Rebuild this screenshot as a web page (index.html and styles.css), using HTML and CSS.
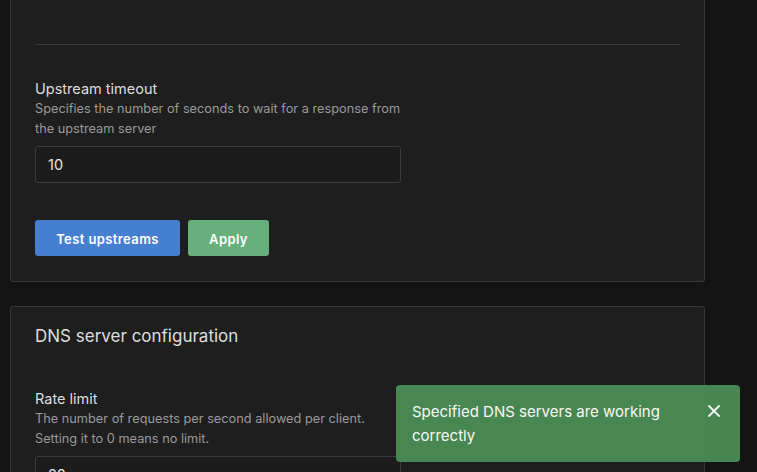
FILE: index.html
```html
<!DOCTYPE html>
<html lang="en">
<head>
    <meta charset="UTF-8">
    <meta name="viewport" content="width=device-width, initial-scale=1.0">
    <title>DNS settings</title>
    <link rel="stylesheet" href="styles.css">
</head>
<body>
    <div class="page">
        <div class="card card-upstream">
            <div class="card-body">
                <div class="divider"></div>

                <div class="form-group">
                    <label class="form-label" for="upstream-timeout">Upstream timeout</label>
                    <div class="form-desc">Specifies the number of seconds to wait for a response from the upstream server</div>
                    <input class="form-input" id="upstream-timeout" type="text" value="10">
                </div>

                <div class="btn-row">
                    <button class="btn btn-primary">Test upstreams</button>
                    <button class="btn btn-success">Apply</button>
                </div>
            </div>
        </div>

        <div class="card">
            <div class="card-header">
                <h2 class="card-title">DNS server configuration</h2>
            </div>
            <div class="card-body">
                <div class="form-group">
                    <label class="form-label" for="rate-limit">Rate limit</label>
                    <div class="form-desc">The number of requests per second allowed per client.<br>Setting it to 0 means no limit.</div>
                    <input class="form-input" id="rate-limit" type="text" value="20">
                </div>
            </div>
        </div>
    </div>

    <div class="toast">
        <div class="toast-text">Specified DNS servers are working correctly</div>
        <button class="toast-close" aria-label="Close">
            <svg width="12" height="12" viewBox="0 0 12 12">
                <path d="M1 1 L11 11 M11 1 L1 11" stroke="#fff" stroke-width="1.8" stroke-linecap="round"/>
            </svg>
        </button>
    </div>
</body>
</html>
```

FILE: styles.css
```css
body {
    margin: 0;
    background-color: #141414;
    font-family: Inter, 'Noto Sans', sans-serif;
    color: #e2e2e2;
    overflow: hidden;
}

.page {
    width: 695px;
    padding-left: 10px;
}

.card {
    background-color: #1e1e1e;
    border: 1px solid #383838;
    border-radius: 3px;
    margin-bottom: 24px;
}

.card-upstream {
    border-top: none;
    border-radius: 0 0 3px 3px;
}

.card-upstream .card-body {
    padding-top: 44px;
    padding-bottom: 25px;
}

.card-header {
    height: 54px;
    box-sizing: border-box;
    display: flex;
    align-items: center;
    padding: 4px 24px 0;
    border-bottom: 1px solid #1c1f24;
}

.card-title {
    margin: 0;
    font-size: 17px;
    font-weight: 400;
    color: #dedede;
}

.card-body {
    padding: 28px 24px 24px;
}

.divider {
    height: 1px;
    background-color: #393939;
    margin-bottom: 34px;
}

.form-group {
    width: 366px;
}

.form-label {
    display: block;
    font-size: 14.5px;
    line-height: 20px;
    color: #dddddd;
}

.form-desc {
    font-size: 12.75px;
    line-height: 20px;
    color: #9a9a9a;
}

.form-input {
    display: block;
    box-sizing: border-box;
    width: 366px;
    height: 37px;
    margin-top: 7px;
    padding: 0 12px;
    background-color: #1c1c1c;
    border: 1px solid #3c3c3c;
    border-radius: 3px;
    font-family: inherit;
    font-size: 14.5px;
    color: #e8e8e8;
}

.btn-row {
    display: flex;
    gap: 8px;
    margin-top: 37px;
}

.btn {
    height: 36px;
    padding-top: 2px;
    border: none;
    border-radius: 3px;
    font-family: inherit;
    font-size: 13px;
    font-weight: 600;
    letter-spacing: 0.4px;
    color: #fff;
}

.btn-primary {
    width: 145px;
    background-color: #467fd0;
}

.btn-success {
    width: 81px;
    background-color: #67b07b;
}

.toast {
    position: fixed;
    left: 396px;
    top: 385px;
    width: 344px;
    height: 77px;
    box-sizing: border-box;
    display: flex;
    justify-content: space-between;
    padding: 15px 16px 0 16px;
    background-color: #4a8b53;
    opacity: 0.97;
    border-radius: 4px;
}

.toast-text {
    width: 275px;
    font-size: 15px;
    line-height: 24px;
    color: #fff;
}

.toast-close {
    align-self: flex-start;
    margin-top: 5px;
    margin-right: 4px;
    padding: 0;
    background: none;
    border: none;
    line-height: 0;
}
```
